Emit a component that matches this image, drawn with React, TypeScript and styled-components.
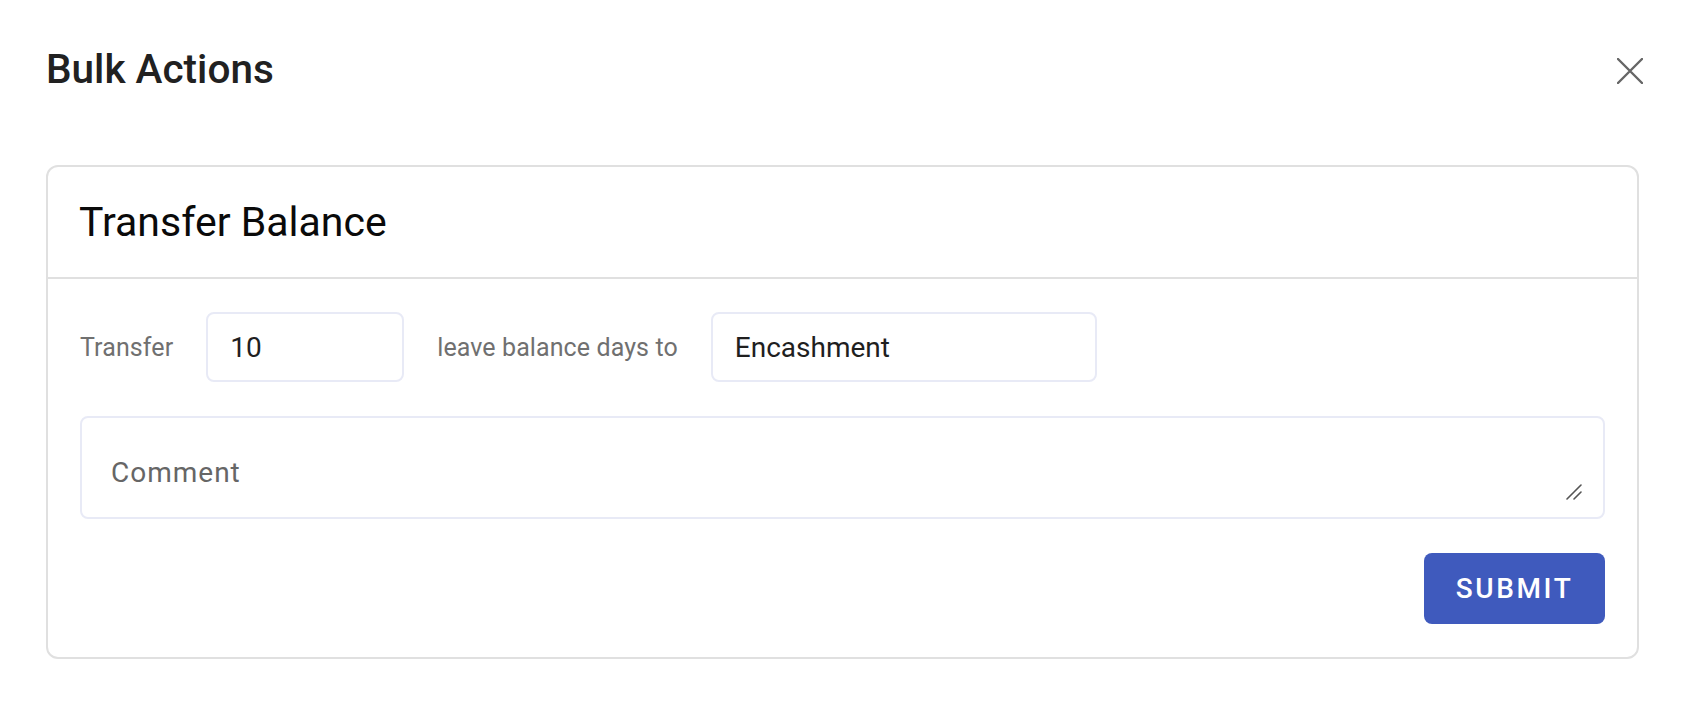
import React from "react";
import styled, { createGlobalStyle } from "styled-components";

const GlobalStyle = createGlobalStyle`
    * {
        box-sizing: border-box;
    }
    body {
        margin: 0;
        background: #ffffff;
        font-family: Roboto, "Noto Sans", Arial, sans-serif;
        -webkit-font-smoothing: antialiased;
    }
`;

export default function App() {
    return (
        <>
            <GlobalStyle />
            <Page>
                <Header>
                    <Title>Bulk Actions</Title>
                    <CloseButton aria-label="close">
                        <svg width="26" height="26" viewBox="0 0 26 26">
                            <path
                                d="M1 1 L25 25 M25 1 L1 25"
                                stroke="#666666"
                                strokeWidth="2.4"
                                strokeLinecap="round"
                            />
                        </svg>
                    </CloseButton>
                </Header>

                <Card>
                    <CardHeader>
                        <CardTitle>Transfer Balance</CardTitle>
                    </CardHeader>
                    <CardBody>
                        <Row>
                            <Label>Transfer</Label>
                            <Field $width={198} defaultValue="10" />
                            <Label>leave balance days to</Label>
                            <Field $width={386} defaultValue="Encashment" />
                        </Row>
                        <CommentBox>
                            <textarea placeholder="Comment" />
                            <ResizeGrip width="16" height="16" viewBox="0 0 16 16">
                                <path
                                    d="M1 15 L15 1 M8 15 L15 8"
                                    stroke="#555555"
                                    strokeWidth="1.6"
                                    strokeLinecap="round"
                                />
                            </ResizeGrip>
                        </CommentBox>
                        <Actions>
                            <SubmitButton>Submit</SubmitButton>
                        </Actions>
                    </CardBody>
                </Card>
            </Page>
        </>
    );
}

const Page = styled.div`
    width: 1688px;
    padding: 0 49px 0 46px;
    display: flex;
    flex-direction: column;
`;

const Header = styled.div`
    height: 138px;
    display: flex;
    align-items: center;
    justify-content: space-between;
    margin-bottom: 27px;
`;

const Title = styled.h2`
    margin: 0;
    font-size: 40.5px;
    font-weight: 500;
    color: #212121;
`;

const CloseButton = styled.button`
    display: flex;
    align-items: center;
    justify-content: center;
    padding: 0;
    margin-top: 4px;
    margin-right: -4px;
    border: none;
    background: transparent;
    cursor: pointer;
`;

const Card = styled.div`
    border: 2px solid #e0e0e0;
    border-radius: 12px;
    display: flex;
    flex-direction: column;
`;

const CardHeader = styled.div`
    height: 112px;
    padding: 0 31px;
    display: flex;
    align-items: center;
    border-bottom: 2px solid #e0e0e0;
`;

const CardTitle = styled.h3`
    margin: 0;
    font-size: 41px;
    font-weight: 400;
    color: #0a0a0a;
`;

const CardBody = styled.div`
    padding: 33px 32px 33px;
    display: flex;
    flex-direction: column;
    gap: 34px;
`;

const Row = styled.div`
    display: flex;
    align-items: center;
    gap: 33px;
`;

const Label = styled.span`
    font-size: 25px;
    color: #707070;
    letter-spacing: 0.1px;
`;

const Field = styled.input<{ $width: number }>`
    width: ${({ $width }) => $width}px;
    height: 70px;
    padding: 0 22px;
    border: 2px solid #e8eaf6;
    border-radius: 8px;
    font-family: Roboto, sans-serif;
    font-size: 28px;
    color: #1f1f1f;
    background: #ffffff;
    outline: none;
`;

const CommentBox = styled.div`
    position: relative;
    border: 2px solid #e8eaf6;
    border-radius: 8px;
    padding: 35px 22px 17px 29px;
    display: flex;

    textarea {
        flex: 1;
        height: 47px;
        padding: 0;
        border: none;
        outline: none;
        resize: none;
        font-family: Roboto, sans-serif;
        font-size: 28px;
        line-height: 40px;
        letter-spacing: 1px;
        color: #1f1f1f;
        background: transparent;
    }
    textarea::placeholder {
        color: #666666;
        opacity: 1;
    }
`;

const ResizeGrip = styled.svg`
    position: absolute;
    right: 21px;
    bottom: 17px;
    pointer-events: none;
`;

const Actions = styled.div`
    display: flex;
    justify-content: flex-end;
`;

const SubmitButton = styled.button`
    width: 181px;
    height: 71px;
    border: none;
    border-radius: 8px;
    background: #3f5abd;
    color: #ffffff;
    font-family: Roboto, sans-serif;
    font-size: 28px;
    font-weight: 500;
    letter-spacing: 2.6px;
    text-transform: uppercase;
    cursor: pointer;
`;
